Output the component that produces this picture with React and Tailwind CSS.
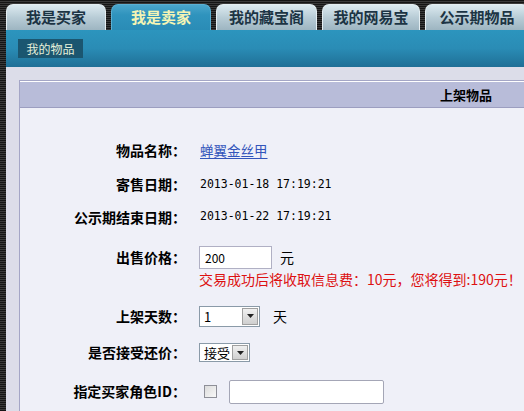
import React from "react";

const stripes =
  "bg-[repeating-linear-gradient(180deg,#151515_0px,#151515_1px,#3a3a3a_1px,#3a3a3a_2px)]";

function Tab({ label, active, w }) {
  return (
    <div
      className={
        "flex items-center justify-center h-[26px] rounded-t-[7px] text-[15px] font-bold border border-b-0 shrink-0 " +
        w +
        " " +
        (active
          ? "bg-[linear-gradient(180deg,#4aa6cc_0%,#2f93bd_40%,#2a8cb6_100%)] text-[#f4f4b4] border-[#5ab0d4]"
          : "bg-[linear-gradient(180deg,#dceaf0_0%,#b8ccd6_50%,#9db5c1_100%)] text-[#1c3444] border-[#e4eef2]")
      }
    >
      {label}
    </div>
  );
}

function Label({ children, h }) {
  return (
    <div
      className={
        "w-[166px] shrink-0 text-right font-bold text-[14px] text-black flex items-center justify-end " +
        h
      }
    >
      {children}
    </div>
  );
}

function Select({ value, w }) {
  return (
    <div className={"flex items-stretch border border-[#8a9aa8] bg-white " + w}>
      <div className="flex-1 flex items-center pl-[4px] text-[13px] text-black leading-none">
        {value}
      </div>
      <div className="w-[16px] m-[1px] bg-[linear-gradient(180deg,#f0f0f0,#cfcfcf)] border border-[#a0a0a0] flex items-center justify-center">
        <svg width="7" height="4" viewBox="0 0 7 4">
          <path d="M0 0 H7 L3.5 4 Z" fill="#222" />
        </svg>
      </div>
    </div>
  );
}

export default function App() {
  return (
    <div
      className={
        "w-[524px] h-[411px] overflow-hidden flex flex-col " +
        stripes +
        " font-['Noto_Sans_CJK_SC','Noto_Sans',sans-serif]"
      }
    >
      {/* tabs */}
      <div className="shrink-0 flex items-end pt-[4px] pl-[6px] gap-[5px] h-[30px]">
        <Tab label="我是买家" w="w-[100px]" />
        <Tab label="我是卖家" active w="w-[100px]" />
        <Tab label="我的藏宝阁" w="w-[101px]" />
        <Tab label="我的网易宝" w="w-[98px]" />
        <Tab label="公示期物品" w="w-[104px]" />
      </div>
      {/* blue band */}
      <div className="shrink-0 ml-[6px] h-[37px] bg-[linear-gradient(180deg,#2c95be_0%,#2a8cb5_50%,#1f6f96_100%)] flex items-start pt-[9px] pl-[12px]">
        <div className="w-[65px] h-[19px] bg-[#1b5670] text-[#e6f0da] text-[12px] flex items-center justify-center leading-none">
          我的物品
        </div>
      </div>
      {/* content area */}
      <div className="ml-[6px] flex-1 min-h-0 bg-[#dcdde9] pt-[13px] pl-[13px]">
        <div className="w-[560px] h-[400px] border border-[#a4a6c6] bg-[#eff0f8]">
          <div className="h-[27px] bg-[#b8bcd9] border-t border-t-[#ffffff] border-b border-b-[#9c9ec0] flex items-center pl-[420px] text-[13px] font-bold text-black">
            上架物品
          </div>
          <div className="flex flex-col pt-[25px]">
            <div className="flex items-center h-[34px]">
              <Label h="h-[34px]">物品名称：</Label>
              <a className="ml-[14px] text-[13.5px] text-[#3355bb] underline underline-offset-2">
                蝉翼金丝甲
              </a>
            </div>
            <div className="flex items-center h-[35px]">
              <Label h="h-[35px]">寄售日期：</Label>
              <span className="ml-[14px] text-[11.5px] text-black font-['DejaVu_Sans_Mono',monospace]">
                2013-01-18 17:19:21
              </span>
            </div>
            <div className="flex items-center h-[30px]">
              <Label h="h-[30px]">公示期结束日期：</Label>
              <span className="ml-[14px] text-[11.5px] text-black font-['DejaVu_Sans_Mono',monospace]">
                2013-01-22 17:19:21
              </span>
            </div>
            <div className="flex items-start mt-[14px]">
              <Label h="h-[23px]">出售价格：</Label>
              <div className="ml-[13px] flex flex-col">
                <div className="flex items-center h-[23px]">
                  <div className="w-[73px] h-[23px] border border-[#b0b0c4] bg-white flex items-center pl-[5px] text-[12px] text-black">
                    200
                  </div>
                  <span className="ml-[8px] text-[14px] text-black">元</span>
                </div>
                <div className="h-[20px] leading-[20px] text-[14px] text-[#dd1111] whitespace-nowrap">
                  交易成功后将收取信息费：10元，您将得到:190元！
                </div>
              </div>
            </div>
            <div className="flex items-center mt-[17px] h-[20px]">
              <Label h="h-[20px]">上架天数：</Label>
              <div className="ml-[13px] flex items-center">
                <Select value="1" w="w-[61px] h-[21px]" />
                <span className="ml-[13px] text-[14px] text-black">天</span>
              </div>
            </div>
            <div className="flex items-center mt-[17px] h-[19px]">
              <Label h="h-[19px]">是否接受还价：</Label>
              <div className="ml-[13px]">
                <Select value="接受" w="w-[51px] h-[19px]" />
              </div>
            </div>
            <div className="flex items-center mt-[18px] h-[23px]">
              <Label h="h-[23px]">指定买家角色ID：</Label>
              <div className="ml-[18px] flex items-center">
                <div className="w-[13px] h-[13px] border border-[#8e8f98] bg-[linear-gradient(135deg,#dcdcdc,#f8f8f8)]" />
                <div className="ml-[12px] w-[155px] h-[24px] border border-[#a4a6b6] rounded-[2px] bg-white" />
              </div>
            </div>
          </div>
        </div>
      </div>
    </div>
  );
}
